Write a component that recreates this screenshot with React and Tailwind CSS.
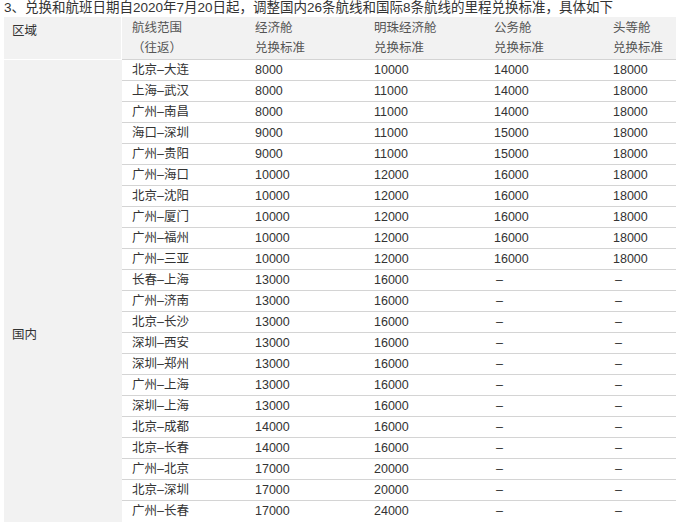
const rows = [
  ["北京–大连", "8000", "10000", "14000", "18000"],
  ["上海–武汉", "8000", "11000", "14000", "18000"],
  ["广州–南昌", "8000", "11000", "14000", "18000"],
  ["海口–深圳", "9000", "11000", "15000", "18000"],
  ["广州–贵阳", "9000", "11000", "15000", "18000"],
  ["广州–海口", "10000", "12000", "16000", "18000"],
  ["北京–沈阳", "10000", "12000", "16000", "18000"],
  ["广州–厦门", "10000", "12000", "16000", "18000"],
  ["广州–福州", "10000", "12000", "16000", "18000"],
  ["广州–三亚", "10000", "12000", "16000", "18000"],
  ["长春–上海", "13000", "16000", "–", "–"],
  ["广州–济南", "13000", "16000", "–", "–"],
  ["北京–长沙", "13000", "16000", "–", "–"],
  ["深圳–西安", "13000", "16000", "–", "–"],
  ["深圳–郑州", "13000", "16000", "–", "–"],
  ["广州–上海", "13000", "16000", "–", "–"],
  ["深圳–上海", "13000", "16000", "–", "–"],
  ["北京–成都", "14000", "16000", "–", "–"],
  ["北京–长春", "14000", "16000", "–", "–"],
  ["广州–北京", "17000", "20000", "–", "–"],
  ["北京–深圳", "17000", "20000", "–", "–"],
  ["广州–长春", "17000", "24000", "–", "–"],
];

const heads = [
  ["航线范围", "（往返）"],
  ["经济舱", "兑换标准"],
  ["明珠经济舱", "兑换标准"],
  ["公务舱", "兑换标准"],
  ["头等舱", "兑换标准"],
];

export default function App() {
  return (
    <div
      className="w-[676px] h-[522px] overflow-hidden bg-white text-[#333] text-[12.5px]"
      style={{ fontFamily: '"Liberation Sans", "Noto Sans CJK SC", sans-serif' }}
    >
      <p className="pl-[4px] h-[17px] leading-[15px] text-[13.5px] whitespace-nowrap">
        3、兑换和航班日期自2020年7月20日起，调整国内26条航线和国际8条航线的里程兑换标准，具体如下
      </p>
      <div className="ml-[4px] grid grid-cols-[118px_123px_119px_120px_119px_76px]">
        <div className="bg-[#f2f2f2] h-[42px] pl-[8px] pt-[5px] border-r border-white">区域</div>
        {heads.map((h, i) => (
          <div key={i} className="bg-[#f2f2f2] h-[42px] pl-[10px] pt-[1px] leading-[20px] text-[#555]">
            <div>{h[0]}</div>
            <div>{h[1]}</div>
          </div>
        ))}
      </div>
      <div className="ml-[4px] flex">
        <div className="w-[118px] h-[470px] bg-[#f2f2f2] border-t border-white flex items-start pt-[266px] pl-[8px]">
          国内
        </div>
        <div className="flex-1">
          {rows.map((r, i) => (
            <div key={i} className="h-[21px] border-t border-[#d4d4d4] grid grid-cols-[123px_119px_120px_119px_1fr] items-center">
              {r.map((c, j) => (
                <div key={j} className={c === "–" ? "pl-[12px]" : "pl-[10px]"}>{c}</div>
              ))}
            </div>
          ))}
        </div>
      </div>
    </div>
  );
}
